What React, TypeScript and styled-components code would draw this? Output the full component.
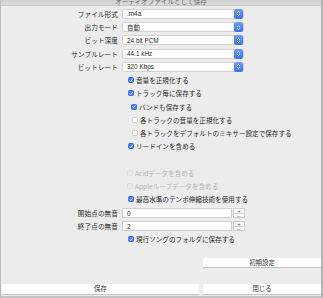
import React from 'react';
import styled, { createGlobalStyle } from 'styled-components';

const GlobalStyle = createGlobalStyle`
  html, body {
    margin: 0;
    padding: 0;
    background: #ececec;
  }
  body {
    font-family: "Noto Sans CJK JP", "Liberation Sans", sans-serif;
    color: #2a2a2a;
  }
`;

const Window = styled.div`
  width: 323px;
  height: 298px;
  box-sizing: border-box;
  background: #ececec;
  border-left: 1px solid #bcbcbc;
  border-right: 2px solid #b4b4b4;
  border-bottom: 2px solid #c4c4c4;
  display: flex;
  flex-direction: column;
  overflow: hidden;
`;

const TitleBar = styled.div`
  height: 6px;
  flex: none;
  background: linear-gradient(#cfcfcf, #dcdcdc);
  border-bottom: 1px solid #c6c6c6;
  box-sizing: border-box;
  overflow: hidden;
  text-align: center;
  font-size: 6.6px;
  line-height: 2px;
  color: #6a6a6a;
`;

const Content = styled.div`
  padding-top: 1.2px;
  display: flex;
  flex-direction: column;
`;

const Row = styled.div<{ $indent?: number }>`
  height: 13.25px;
  display: flex;
  align-items: center;
  padding-left: ${(p) => p.$indent ?? 0}px;
  font-size: 6.6px;
`;

const Label = styled.div`
  width: 120px;
  text-align: right;
  padding-right: 3px;
  box-sizing: border-box;
  white-space: nowrap;
  letter-spacing: 0.1px;
`;

const Select = styled.div`
  margin-left: 1px;
  width: 122px;
  height: 10px;
  box-sizing: border-box;
  display: flex;
  align-items: center;
  background: #ffffff;
  border: 0.5px solid #d2d2d2;
  border-radius: 2px;
  font-size: 6.4px;
  font-family: "Liberation Sans", "Noto Sans CJK JP", sans-serif;
`;

const SelectValue = styled.span`
  flex: 1;
  padding-left: 4px;
`;

const Stepper = styled.span`
  width: 9px;
  height: 10px;
  border-radius: 2px;
  background: linear-gradient(#6a9cf6, #3f74e6);
  display: flex;
  align-items: center;
  justify-content: center;
`;

const Check = styled.span<{ $checked?: boolean; $disabled?: boolean }>`
  width: 6px;
  height: 6px;
  flex: none;
  box-sizing: border-box;
  border-radius: 1.5px;
  margin-right: 2px;
  display: inline-flex;
  align-items: center;
  justify-content: center;
  background: ${(p) =>
    p.$checked ? '#4a7ff0' : p.$disabled ? '#e9e9e9' : '#ffffff'};
  border: 0.5px solid
    ${(p) => (p.$checked ? '#3d6fd8' : p.$disabled ? '#dedede' : '#cfcfcf')};
`;

const CheckText = styled.span<{ $disabled?: boolean }>`
  color: ${(p) => (p.$disabled ? '#b3b3b3' : '#2a2a2a')};
  white-space: nowrap;
`;

const NumberField = styled.div`
  margin-left: 1px;
  display: flex;
  align-items: center;
  height: 10px;
`;

const NumberInput = styled.div`
  width: 110px;
  height: 10px;
  box-sizing: border-box;
  background: #ffffff;
  border: 0.5px solid #cfcfcf;
  font-family: "Liberation Sans", sans-serif;
  font-size: 6.6px;
  line-height: 9px;
  padding-left: 4px;
`;

const Spin = styled.div`
  margin-left: 1px;
  width: 12px;
  height: 10px;
  box-sizing: border-box;
  background: #fbfbfb;
  border: 0.5px solid #cfcfcf;
  display: flex;
  flex-direction: column;
  font-family: "Liberation Sans", sans-serif;
  font-size: 6px;
  line-height: 4.5px;
  text-align: center;
  color: #555;
`;

const SpinHalf = styled.span<{ $top?: boolean }>`
  flex: 1;
  border-bottom: ${(p) => (p.$top ? '0.5px solid #d6d6d6' : 'none')};
`;

const ButtonGrid = styled.div<{ $top: number }>`
  display: grid;
  grid-template-columns: 197px 118px;
  column-gap: 4px;
  padding-left: 1px;
  margin-top: ${(p) => p.$top}px;
`;

const Button = styled.div<{ $col?: number; $tall?: boolean }>`
  grid-column: ${(p) => p.$col ?? 'auto'};
  height: ${(p) => (p.$tall ? 10 : 9)}px;
  background: #ffffff;
  box-shadow: 0 0.5px 0.5px rgba(0, 0, 0, 0.18);
  text-align: center;
  font-size: 6.4px;
  line-height: ${(p) => (p.$tall ? 10 : 9)}px;
  color: #333;
`;

const CheckMark = () => (
  <svg width="5" height="5" viewBox="0 0 10 10">
    <path d="M2 5.2 L4.2 7.4 L8.2 2.6" fill="none" stroke="#fff" strokeWidth="1.8" strokeLinecap="round" strokeLinejoin="round" />
  </svg>
);

const Arrows = () => (
  <svg width="5" height="7" viewBox="0 0 10 14">
    <path d="M2.5 5.5 L5 3 L7.5 5.5 M2.5 8.5 L5 11 L7.5 8.5" fill="none" stroke="#fff" strokeWidth="1.5" strokeLinecap="round" strokeLinejoin="round" />
  </svg>
);

const selects = [
  ['ファイル形式', '.m4a'],
  ['出力モード', '自動'],
  ['ビット深度', '24 bit PCM'],
  ['サンプルレート', '44.1 kHz'],
  ['ビットレート', '320 Kbps'],
];

interface CheckItem {
  text: string;
  checked?: boolean;
  disabled?: boolean;
  indent: number;
}

const options: (CheckItem | null)[] = [
  { text: '音量を正規化する', checked: true, indent: 127 },
  { text: 'トラック毎に保存する', checked: true, indent: 127 },
  { text: 'バンドも保存する', checked: true, indent: 130 },
  { text: '各トラックの音量を正規化する', indent: 131 },
  { text: '各トラックをデフォルトのミキサー設定で保存する', indent: 131 },
  { text: 'リードインを含める', checked: true, indent: 127 },
  null,
  { text: 'Acidデータを含める', disabled: true, indent: 126 },
  { text: 'Appleループデータを含める', disabled: true, indent: 126 },
  { text: '最高水準のテンポ伸縮技術を使用する', checked: true, indent: 127 },
];

const CheckRow = ({ item }: { item: CheckItem }) => (
  <Row $indent={item.indent}>
    <Check $checked={item.checked} $disabled={item.disabled}>
      {item.checked && <CheckMark />}
    </Check>
    <CheckText $disabled={item.disabled}>{item.text}</CheckText>
  </Row>
);

const App: React.FC = () => (
  <>
    <GlobalStyle />
    <Window>
      <TitleBar>オーディオファイルとして保存</TitleBar>
      <Content>
        {selects.map(([label, value]) => (
          <Row key={label}>
            <Label>{label}</Label>
            <Select>
              <SelectValue>{value}</SelectValue>
              <Stepper>
                <Arrows />
              </Stepper>
            </Select>
          </Row>
        ))}
        {options.map((o, i) =>
          o ? <CheckRow key={o.text} item={o} /> : <Row key={'gap' + i} />,
        )}
        {[
          ['開始点の無音', '0'],
          ['終了点の無音', '2'],
        ].map(([label, value]) => (
          <Row key={label}>
            <Label>{label}</Label>
            <NumberField>
              <NumberInput>{value}</NumberInput>
              <Spin>
                <SpinHalf $top>+</SpinHalf>
                <SpinHalf>–</SpinHalf>
              </Spin>
            </NumberField>
          </Row>
        ))}
        <CheckRow item={{ text: '現行ソングのフォルダに保存する', checked: true, indent: 127 }} />
      </Content>
      <ButtonGrid $top={12.5}>
        <Button $col={2}>初期設定</Button>
      </ButtonGrid>
      <ButtonGrid $top={16.5}>
        <Button $tall>保存</Button>
        <Button $tall>閉じる</Button>
      </ButtonGrid>
    </Window>
  </>
);

export default App;
